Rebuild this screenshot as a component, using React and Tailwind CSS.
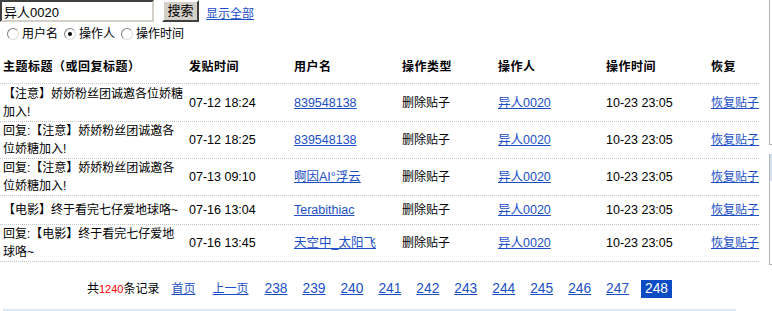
import { useState } from 'react'

const rows = [
  { lines: ['【注意】娇娇粉丝团诚邀各位娇糖', '加入!'], time: '07-12 18:24', user: '839548138', h: 'h-[38px]' },
  { lines: ['回复:【注意】娇娇粉丝团诚邀各', '位娇糖加入!'], time: '07-12 18:25', user: '839548138', h: 'h-[37px]' },
  { lines: ['回复:【注意】娇娇粉丝团诚邀各', '位娇糖加入!'], time: '07-13 09:10', user: '啊因AI°浮云', h: 'h-[37px]' },
  { lines: ['【电影】终于看完七仔爱地球咯~'], time: '07-16 13:04', user: 'Terabithiac', h: 'h-[29px]' },
  { lines: ['回复:【电影】终于看完七仔爱地', '球咯~'], time: '07-16 13:45', user: '天空中_太阳飞', h: 'h-[37px]' },
]

const headers = ['主题标题（或回复标题）', '发贴时间', '用户名', '操作类型', '操作人', '操作时间', '恢复']
const pages = ['238', '239', '240', '241', '242', '243', '244', '245', '246', '247']
const cols = 'grid grid-cols-[186px_105px_108px_96px_108px_105px_51px] items-center'

function Radio({ checked, label, onClick }) {
  return (
    <label className="flex items-center cursor-pointer" onClick={onClick}>
      <span className="w-[12px] h-[12px] rounded-full border border-t-[#808080] border-l-[#808080] border-b-[#dcdcdc] border-r-[#dcdcdc] bg-white flex items-center justify-center">
        {checked && <span className="w-[4px] h-[4px] rounded-full bg-black" />}
      </span>
      <span className="ml-[3px]">{label}</span>
    </label>
  )
}

export default function App() {
  const [mode, setMode] = useState('op')
  const [keyword, setKeyword] = useState('异人0020')

  return (
    <div className="relative w-[772px] h-[311px] bg-white text-black text-[12px] overflow-hidden font-['Liberation_Sans','Noto_Sans_CJK_SC',sans-serif]">
      {/* 搜索栏 */}
      <div className="flex items-start h-[22px]">
        <input
          value={keyword}
          onChange={(e) => setKeyword(e.target.value)}
          className="w-[154px] h-[22px] px-[2px] text-[13px] leading-[16px] border-2 border-t-[#404040] border-l-[#404040] border-b-[#d4d0c8] border-r-[#d4d0c8] outline-none bg-white"
        />
        <button className="ml-[8px] w-[37px] h-[22px] text-[13px] leading-[16px] bg-[#d4d0c8] border-2 border-t-white border-l-white border-b-[#404040] border-r-[#404040]">
          搜索
        </button>
        <a href="#" className="ml-[7px] mt-[7px] leading-[14px] text-[#1c4fc6] underline">显示全部</a>
      </div>

      <div className="flex items-center gap-[6px] pl-[7px] mt-[5px] h-[14px] leading-[14px]">
        <Radio checked={mode === 'user'} label="用户名" onClick={() => setMode('user')} />
        <Radio checked={mode === 'op'} label="操作人" onClick={() => setMode('op')} />
        <Radio checked={mode === 'time'} label="操作时间" onClick={() => setMode('time')} />
      </div>

      {/* 列表 */}
      <div className="w-[759px] mt-[10px] leading-[18px]">
        <div className={`${cols} h-[33px] border-b border-dotted border-[#c4c4c4]`}>
          {headers.map((h) => (
            <div key={h} className="pl-[3px] font-bold tracking-[0.5px] whitespace-nowrap">{h}</div>
          ))}
        </div>
        {rows.map((r, i) => (
          <div key={i} className={`${cols} ${r.h} border-b border-dotted border-[#c4c4c4]`}>
            <div className="pl-[3px] whitespace-nowrap">
              {r.lines.map((l, j) => (
                <div key={j}>{l}</div>
              ))}
            </div>
            <div className="pl-[3px] text-[12.5px] whitespace-nowrap">{r.time}</div>
            <div className="pl-[3px] text-[12.5px] whitespace-nowrap">
              <a href="#" className="text-[#1c4fc6] underline">{r.user}</a>
            </div>
            <div className="pl-[3px] whitespace-nowrap">删除贴子</div>
            <div className="pl-[3px] text-[12.5px] whitespace-nowrap">
              <a href="#" className="text-[#1c4fc6] underline">异人0020</a>
            </div>
            <div className="pl-[3px] text-[12.5px] whitespace-nowrap">10-23 23:05</div>
            <div className="pl-[3px] whitespace-nowrap">
              <a href="#" className="text-[#1c4fc6] underline">恢复贴子</a>
            </div>
          </div>
        ))}
      </div>

      {/* 分页 */}
      <div className="w-[759px] mt-[18px] h-[18px] flex items-center justify-center gap-[15px] leading-[18px]">
        <span className="mr-[-3px]">共<span className="text-[11px] text-[#ff0000]">1240</span>条记录</span>
        <a href="#" className="text-[#1c4fc6] underline">首页</a>
        <a href="#" className="ml-[2px] text-[#1c4fc6] underline">上一页</a>
        {pages.map((p, i) => (
          <a key={p} href="#" className={`${i === 0 ? 'ml-[1px]' : ''} text-[13.75px] text-[#1c4fc6] underline`}>{p}</a>
        ))}
        <span className="ml-[-3px] px-[4px] h-[18px] text-[13.75px] bg-[#0b4cc4] text-white">248</span>
      </div>

      <div className="ml-[3px] mt-[11px] w-[733px] h-[2px] bg-[#d7e7f5]" />

      {/* 右侧边框残影 */}
      <div className="absolute left-[769px] top-0 w-[3px] h-[145px] border-l border-b border-[#b4b4b4]" />
      <div className="absolute left-[769px] top-[154px] w-[3px] h-[111px] border-l border-b border-[#b4b4b4]">
        <div className="h-[27px] bg-[#d3e0ef]" />
      </div>
    </div>
  )
}
